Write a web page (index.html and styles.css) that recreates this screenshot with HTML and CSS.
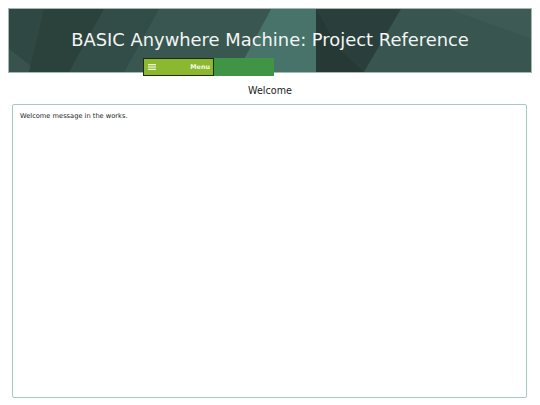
FILE: index.html
```html
<!DOCTYPE html>
<html lang="en">
<head>
<meta charset="utf-8">
<title>BASIC Anywhere Machine: Project Reference</title>
<link rel="stylesheet" href="styles.css">
</head>
<body>
<header class="banner">
  <svg class="banner-bg" viewBox="0 0 522 63" preserveAspectRatio="none" aria-hidden="true">
    <rect x="0" y="0" width="522" height="63" fill="#2f4843"/>
    <polygon points="0,40 0,63 30,63" fill="#38534d"/>
    <polygon points="35,0 95,0 60,63 20,63" fill="#2b413c"/>
    <polygon points="95,0 150,0 115,63 60,63" fill="#324d47"/>
    <polygon points="150,0 262,0 228,63 115,63" fill="#395750"/>
    <polygon points="262,0 307,0 307,63 228,63" fill="#47736a"/>
    <polygon points="307,0 392,0 355,63 307,63" fill="#2a3f3b"/>
    <polygon points="307,0 330,40 355,63 307,63" fill="#273935"/>
    <polygon points="392,0 522,0 522,63 355,63" fill="#395550"/>
    <polygon points="440,0 522,0 522,30" fill="#3d5a54"/>
  </svg>
  <h1 class="banner-title">BASIC Anywhere Machine: Project Reference</h1>
  <nav class="menubar">
    <button class="menu-btn" type="button">
      <svg class="hamburger" viewBox="0 0 8 6" aria-hidden="true">
        <rect x="0" y="0" width="8" height="1.3" fill="#e8f2d4"/>
        <rect x="0" y="2.35" width="8" height="1.3" fill="#e8f2d4"/>
        <rect x="0" y="4.7" width="8" height="1.3" fill="#e8f2d4"/>
      </svg>
      <span class="menu-label">Menu</span>
    </button>
    <div class="menu-rest"></div>
  </nav>
</header>
<h2 class="page-title">Welcome</h2>
<main class="content">
  <p class="content-text">Welcome message in the works.</p>
</main>
</body>
</html>
```
FILE: styles.css
```css
html, body {
  margin: 0;
  padding: 0;
  background: #ffffff;
}
body {
  margin: 8px;
  font-family: "DejaVu Sans", Verdana, sans-serif;
  color: #1a1a1a;
}
.banner {
  position: relative;
  box-sizing: border-box;
  height: 65px;
  border: 1px solid #a3b8b3;
  padding-top: 20px;
  display: flex;
  flex-direction: column;
  align-items: stretch;
}
.banner-bg {
  position: absolute;
  left: 0;
  top: 0;
  width: 100%;
  height: 100%;
  display: block;
}
.banner-title {
  position: relative;
  margin: 0;
  text-align: center;
  font-weight: normal;
  font-size: 17.9px;
  line-height: 21px;
  color: #f2f5f4;
}
.menubar {
  position: relative;
  margin-top: 8px;
  margin-left: 134px;
  width: 131px;
  height: 18px;
  display: flex;
}
.menu-btn {
  box-sizing: border-box;
  width: 71px;
  height: 18px;
  margin: 0;
  padding: 0 3px 0 4px;
  border: 1px solid #1d2b12;
  background: #8bb82e;
  display: flex;
  align-items: center;
  justify-content: space-between;
  font-family: "DejaVu Sans", Verdana, sans-serif;
}
.hamburger {
  width: 8px;
  height: 6px;
  display: block;
}
.menu-label {
  font-size: 6.4px;
  font-weight: bold;
  color: #f4f8ec;
}
.menu-rest {
  flex: 1;
  background: #3f9446;
}
.page-title {
  margin: 12px 0 7px;
  text-align: center;
  font-weight: normal;
  font-size: 9.6px;
  line-height: 12px;
  color: #222222;
}
.content {
  box-sizing: border-box;
  height: 294px;
  margin: 0 5px 0 4px;
  border: 1px solid #a6c9c5;
  border-radius: 2px;
  padding: 7px 7px;
}
.content-text {
  margin: 0;
  font-size: 6.67px;
  line-height: 9px;
  color: #1a1a1a;
}
```
